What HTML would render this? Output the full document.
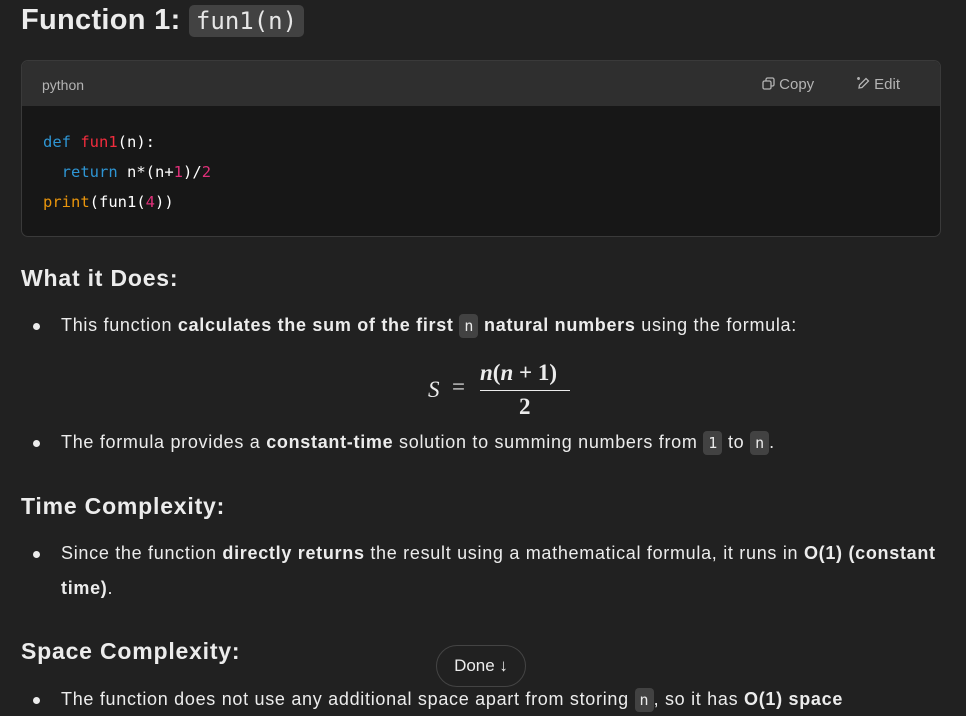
<!DOCTYPE html>
<html><head><meta charset="utf-8"><style>
body{margin:0;width:966px;height:716px;overflow:hidden;background:#212121;color:#ececec;font-family:"Liberation Sans",sans-serif;position:relative}
.a{position:absolute;white-space:nowrap}
.h1{font-size:29px;font-weight:900;left:21px;top:4px;letter-spacing:0.3px}
.ic{background:#424242;border-radius:5px;font-family:"DejaVu Sans Mono",monospace;font-weight:normal;font-size:24px;padding:2px 7px;color:#e6e6e6;letter-spacing:0}
.code{left:21px;top:60px;width:918px;height:175px;border:1px solid #3a3a3a;border-radius:7px;background:#171717;overflow:hidden}
.hd{height:45px;background:#2f2f2f;font-size:14px;color:#b4b4b4;position:relative}
pre{margin:0;position:absolute;left:43px;top:127px;font-family:"DejaVu Sans Mono",monospace;font-size:15.5px;line-height:30px;color:#fff;white-space:pre}
.k{color:#2e95d3}.f{color:#f22c3d}.n{color:#df3079}.p{color:#e9950c}
.h2{font-size:23px;font-weight:bold;left:21px;letter-spacing:0.8px}
.t{font-size:18px;left:61px;color:#ececec;letter-spacing:0.7px}
.dot{position:absolute;left:33px;width:7px;height:7px;border-radius:50%;background:#ececec}
.c{background:#424242;border-radius:4px;font-family:"DejaVu Sans Mono",monospace;font-size:15px;padding:3px 5px;letter-spacing:0}
b{font-weight:bold}
</style></head><body>
<div class="a h1">Function 1: <span class="ic">fun1(n)</span></div>
<div class="a code"><div class="hd"><span class="a" style="left:20px;top:16px">python</span>
<span class="a" style="left:740px;top:15px;font-size:15px">
<svg width="13" height="13" viewBox="0 0 13 13" style="vertical-align:-1px" fill="none" stroke="#b4b4b4" stroke-width="1.3"><rect x="1" y="4" width="8" height="8" rx="1.5"/><path d="M4 4V2.5A1.5 1.5 0 0 1 5.5 1h5A1.5 1.5 0 0 1 12 2.5v5A1.5 1.5 0 0 1 10.5 9H9"/></svg> Copy</span>
<span class="a" style="left:835px;top:15px;font-size:15px">
<svg width="13" height="13" viewBox="0 0 13 13" style="vertical-align:-1px" fill="none" stroke="#b4b4b4" stroke-width="1.3"><path d="M2 11l.5-3L9 1.5l2.5 2.5L5 10.5z"/><circle cx="1.5" cy="1.5" r=".8"/></svg> Edit</span></div></div>
<pre><span class="k">def</span> <span class="f">fun1</span>(n):
  <span class="k">return</span> n*(n+<span class="n">1</span>)/<span class="n">2</span>
<span class="p">print</span>(fun1(<span class="n">4</span>))</pre>
<div class="a h2" style="top:265px">What it Does:</div>
<div class="dot" style="top:323px"></div>
<div class="a t" style="top:315px">This function <b>calculates the sum of the first <span class="c" style="font-weight:normal">n</span> natural numbers</b> using the formula:</div>
<div class="a" style="left:428px;top:377px;font-family:'Liberation Serif',serif;font-size:23px;font-style:italic">S</div>
<div class="a" style="left:452px;top:374px;font-family:'Liberation Serif',serif;font-size:23px">=</div>
<div class="a" style="left:480px;top:360px;font-family:'Liberation Serif',serif;font-size:23px;font-weight:bold"><i>n</i>(<i>n</i> + 1)</div>
<div class="a" style="left:480px;top:390px;width:90px;height:1px;background:#ececec"></div>
<div class="a" style="left:519px;top:394px;font-family:'Liberation Serif',serif;font-size:23px;font-weight:bold">2</div>
<div class="dot" style="top:440px"></div>
<div class="a t" style="top:432px">The formula provides a <b>constant-time</b> solution to summing numbers from <span class="c">1</span> to <span class="c">n</span>.</div>
<div class="a h2" style="top:493px">Time Complexity:</div>
<div class="dot" style="top:551px"></div>
<div class="a t" style="top:543px">Since the function <b>directly returns</b> the result using a mathematical formula, it runs in <b>O(1) (constant</b></div>
<div class="a t" style="top:578px"><b>time)</b>.</div>
<div class="a h2" style="top:638px">Space Complexity:</div>
<div class="dot" style="top:697px"></div>
<div class="a t" style="top:689px">The function does not use any additional space apart from storing <span class="c">n</span>, so it has <b>O(1) space</b></div>
<div class="a" style="left:436px;top:645px;width:88px;height:40px;border:1px solid #444;border-radius:21px;background:#212121;font-size:17px;line-height:40px;text-align:center">Done ↓</div>
</body></html>
